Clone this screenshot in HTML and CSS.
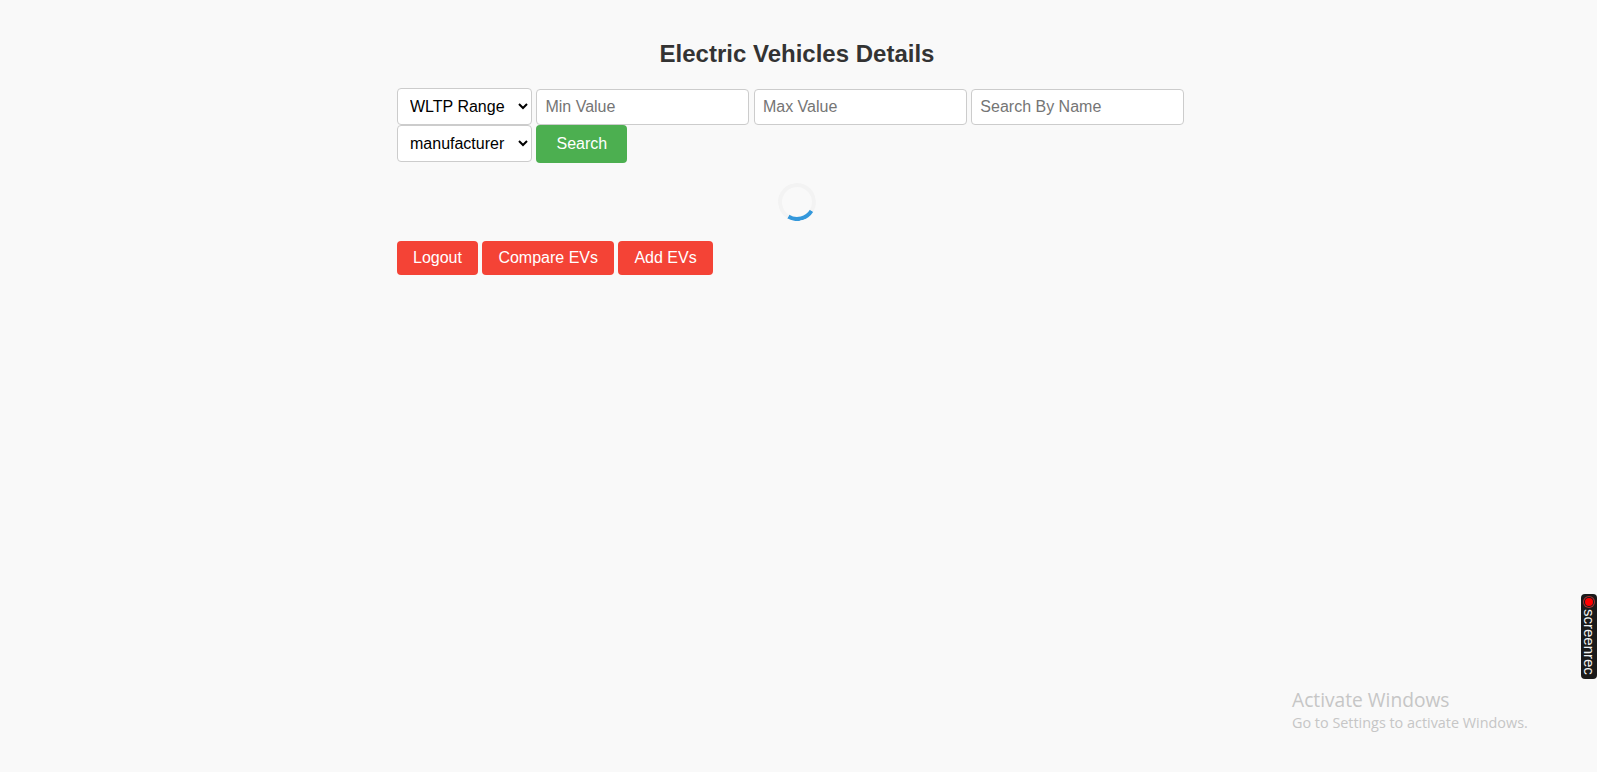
FILE: index.html
```html
<!DOCTYPE html>
<html lang="en">
<head>
<meta charset="utf-8">
<title>Electric Vehicles Details</title>
<link rel="stylesheet" href="styles.css">
</head>
<body>
<main class="container">
  <h1 class="title">Electric Vehicles Details</h1>
  <form class="filters">
    <select class="select"><option>WLTP Range</option></select>
    <input class="input" type="text" placeholder="Min Value">
    <input class="input" type="text" placeholder="Max Value">
    <input class="input" type="text" placeholder="Search By Name">
    <select class="select"><option>manufacturer</option></select>
    <button class="btn btn-search" type="button">Search</button>
  </form>
  <div class="spinner"></div>
  <div class="actions">
    <button class="btn btn-red" type="button">Logout</button>
    <button class="btn btn-red" type="button">Compare EVs</button>
    <button class="btn btn-red" type="button">Add EVs</button>
  </div>
</main>
<div class="screenrec"><span class="rec-dot"></span><span class="rec-text">screenrec</span></div>
<div class="watermark">
  <div class="wm-title">Activate Windows</div>
  <div class="wm-sub">Go to Settings to activate Windows.</div>
</div>
</body>
</html>
```
FILE: styles.css
```css
* { box-sizing: border-box; }
html, body { height: 100%; }
body {
  margin: 0;
  padding-right: 3px;
  background: #f9f9f9;
  font-family: "Liberation Sans", Arial, sans-serif;
  color: #333;
  overflow: hidden;
}
.container {
  width: 800px;
  margin: 0 auto;
  padding-top: 40px;
}
.title {
  margin: 0 0 20px;
  font-size: 24px;
  line-height: 28px;
  font-weight: 700;
  text-align: center;
  color: #333;
}
.filters { font-size: 16px; line-height: 18px; }
.select {
  width: 135px;
  height: 37px;
  padding: 0 0 0 8px;
  font: 16px "Liberation Sans", Arial, sans-serif;
  color: #000;
  background: #fff;
  border: 1px solid #ccc;
  border-radius: 4px;
}
.input {
  width: 213px;
  height: 36px;
  padding: 8px;
  font: 16px "Liberation Sans", Arial, sans-serif;
  background: #fff;
  border: 1px solid #ccc;
  border-radius: 4px;
}
.input::placeholder { color: #757575; }
.btn {
  border: 0;
  border-radius: 4px;
  color: #fff;
  font: 16px/18px "Liberation Sans", Arial, sans-serif;
}
.btn-search { padding: 10px 20px; background: #4caf50; }
.btn-red { padding: 8px 16px; background: #f44336; }
.spinner {
  width: 38px;
  height: 38px;
  margin: 20px auto;
  border: 4px solid #f3f3f3;
  border-bottom-color: #3498db;
  border-radius: 50%;
  transform: rotate(-14deg);
}
.actions { font-size: 16px; }
.screenrec {
  position: absolute;
  right: 0;
  top: 594px;
  width: 16px;
  height: 85px;
  background: #1a1a1a;
  border-radius: 4px;
  display: flex;
  flex-direction: column;
  align-items: center;
  padding-top: 3px;
}
.rec-dot {
  width: 8px;
  height: 8px;
  margin-top: 1px;
  border-radius: 50%;
  background: #f00;
  box-shadow: 0 0 0 1px #1a1a1a, 0 0 0 2px #a33;
  flex: none;
}
.rec-text {
  writing-mode: vertical-rl;
  color: #f2f2f2;
  font: 15px/15px "Liberation Sans", sans-serif;
  margin-top: 3px;
}
.watermark {
  position: absolute;
  left: 1292px;
  top: 687px;
  color: #c6c6c6;
  font-family: "Open Sans", sans-serif;
  white-space: nowrap;
}
.wm-title { font-size: 19.2px; line-height: 26px; }
.wm-sub { font-size: 14.4px; line-height: 18px; margin-top: 1px; }
```
